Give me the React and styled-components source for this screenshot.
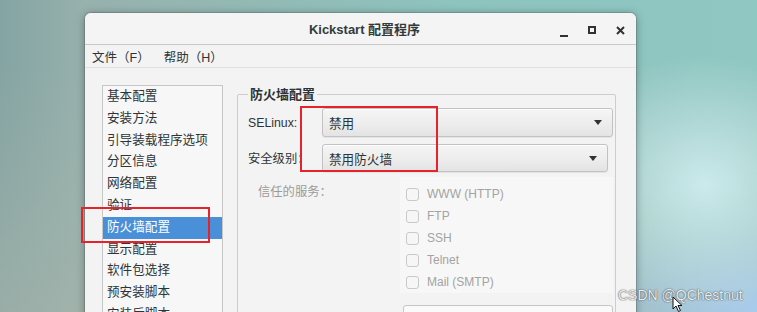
import React from "react";
import styled, { createGlobalStyle } from "styled-components";

const Global = createGlobalStyle`
  html, body { margin: 0; padding: 0; }
  body {
    width: 757px;
    height: 312px;
    overflow: hidden;
    font-family: "Liberation Sans", "Noto Sans CJK SC", sans-serif;
  }
`;

const navItems = [
  "基本配置",
  "安装方法",
  "引导装载程序选项",
  "分区信息",
  "网络配置",
  "验证",
  "防火墙配置",
  "显示配置",
  "软件包选择",
  "预安装脚本",
  "安装后脚本",
];

const services = ["WWW (HTTP)", "FTP", "SSH", "Telnet", "Mail (SMTP)"];

const App = () => {
  return (
    <Desktop>
      <Global />
      <Window>
        <TitleBar>
          <Title>Kickstart 配置程序</Title>
          <WinButtons>
            <Minimize />
            <Maximize />
            <CloseBtn>
              <svg width="9" height="9" viewBox="0 0 9 9">
                <path d="M1 1 L8 8 M8 1 L1 8" stroke="#2e3436" strokeWidth="2" />
              </svg>
            </CloseBtn>
          </WinButtons>
        </TitleBar>
        <MenuBar>
          <MenuItem>文件（F）</MenuItem>
          <MenuItem>帮助（H）</MenuItem>
        </MenuBar>
        <Content>
          <NavList>
            {navItems.map((n) => (
              <NavItem key={n} $active={n === "防火墙配置"}>{n}</NavItem>
            ))}
          </NavList>
          <Frame>
            <Legend>防火墙配置</Legend>
            <FormRow>
              <FieldLabel>SELinux:</FieldLabel>
              <Combo $big>
                <span>禁用</span>
                <Arrow />
              </Combo>
            </FormRow>
            <FormRow>
              <FieldLabel>安全级别：</FieldLabel>
              <Combo $trim={5}>
                <span>禁用防火墙</span>
                <Arrow />
              </Combo>
            </FormRow>
            <Services>
              <ServicesLabel>信任的服务：</ServicesLabel>
              <ServiceList>
                {services.map((s) => (
                  <ServiceRow key={s}>
                    <Check />
                    <ServiceName>{s}</ServiceName>
                  </ServiceRow>
                ))}
              </ServiceList>
            </Services>
            <PortBox />
          </Frame>
        </Content>
      </Window>
      <Mark style={{ left: 81, top: 207, width: 129, height: 36 }} />
      <Mark style={{ left: 300, top: 106, width: 138, height: 66 }} />
      <Watermark>CSDN @QChestnut</Watermark>
      <Cursor width="12" height="17" viewBox="0 0 12 17">
        <path d="M1 1 L1 13 L4 10 L6.5 15.5 L8.5 14.5 L6 9.5 L10 9.5 Z" fill="#fff" stroke="#111" strokeWidth="1" strokeLinejoin="round" />
      </Cursor>
    </Desktop>
  );
};

export default App;

const Desktop = styled.div`
  position: relative;
  width: 757px;
  height: 312px;
  overflow: hidden;
  padding: 13px 0 0 85px;
  box-sizing: border-box;
  background:
    radial-gradient(ellipse 150px 130px at 705px 185px, rgba(206, 237, 238, 0.95), rgba(206, 237, 238, 0)),
    radial-gradient(ellipse 200px 110px at 757px 312px, rgba(170, 204, 240, 0.95), rgba(170, 204, 240, 0)),
    linear-gradient(180deg, rgba(168, 178, 170, 0) 20%, rgba(168, 180, 170, 0.6) 100%),
    linear-gradient(90deg, #84a4a3 0, #97b1ad 85px, #8ec3be 450px, #8fc7c2 757px);
`;

const Window = styled.div`
  width: 551px;
  height: 340px;
  background: #f3f3f3;
  border-radius: 6px 6px 0 0;
  box-shadow: 0 1px 8px rgba(0, 0, 0, 0.35), 0 0 0 1px rgba(0, 0, 0, 0.12);
  display: flex;
  flex-direction: column;
  overflow: hidden;
  color: #2e3436;
`;

const TitleBar = styled.div`
  height: 31px;
  flex: none;
  display: flex;
  align-items: center;
  justify-content: center;
  position: relative;
  border-bottom: 1px solid #c9c9c9;
  background: #f4f4f4;
`;

const Title = styled.div`
  font-size: 13px;
  font-weight: 700;
  color: #333a3c;
  margin-left: 8px;
`;

const WinButtons = styled.div`
  position: absolute;
  right: 11px;
  top: 10px;
  display: flex;
  align-items: center;
  gap: 20px;
`;

const Minimize = styled.div`
  width: 8px;
  height: 10px;
  border-bottom: 2px solid #2e3436;
  box-sizing: border-box;
  margin-top: 4px;
`;

const Maximize = styled.div`
  width: 8px;
  height: 8px;
  border: 2px solid #2e3436;
  box-sizing: border-box;
`;

const CloseBtn = styled.div`
  display: flex;
`;

const MenuBar = styled.div`
  height: 22px;
  flex: none;
  display: flex;
  align-items: center;
  gap: 14px;
  padding-left: 7px;
  border-bottom: 1px solid #e1e1e1;
  font-size: 12.5px;
`;

const MenuItem = styled.span``;

const Content = styled.div`
  flex: 1;
  display: flex;
  align-items: flex-start;
  gap: 14px;
  padding: 17px 20px 0 17px;
`;

const NavList = styled.div`
  width: 121px;
  height: 260px;
  flex: none;
  box-sizing: border-box;
  border: 1px solid #c6c6c6;
  background: #f7f7f7;
  font-size: 12.6px;
`;

const NavItem = styled.div`
  height: 21.8px;
  line-height: 21.8px;
  padding-left: 4px;
  white-space: nowrap;
  background: ${(p) => (p.$active ? "#4a90d9" : "transparent")};
  color: ${(p) => (p.$active ? "#fff" : "#2e3436")};
`;

const Frame = styled.fieldset`
  flex: 1;
  margin: 1px 0 0 0;
  padding: 5px 2px 0 10px;
  border: 1px solid #cdcdcd;
  border-radius: 2px;
  min-height: 260px;
  box-sizing: border-box;
  display: flex;
  flex-direction: column;
`;

const Legend = styled.legend`
  font-size: 13px;
  font-weight: 700;
  line-height: 17px;
  padding: 0 2px;
  margin-left: 0;
  color: #2e3436;
`;

const FormRow = styled.div`
  display: flex;
  align-items: center;
  margin-bottom: 7px;
`;

const FieldLabel = styled.div`
  width: 74px;
  flex: none;
  font-size: 12.3px;
`;

const Combo = styled.div`
  flex: 1;
  height: ${(p) => (p.$big ? 29 : 28)}px;
  margin-right: ${(p) => p.$trim || 0}px;
  box-sizing: border-box;
  display: flex;
  align-items: center;
  justify-content: space-between;
  padding: 0 10px 0 6px;
  border: 1px solid #c2c2c2;
  border-radius: 3px;
  background: linear-gradient(180deg, #f5f5f5 0%, #ececec 60%, #e3e3e3 100%);
  box-shadow: 0 1px 0 rgba(0, 0, 0, 0.06), inset 0 1px 0 #fff;
  font-size: 12.6px;
  color: #2e3436;
`;

const Arrow = styled.div`
  width: 0;
  height: 0;
  border-left: 4px solid transparent;
  border-right: 4px solid transparent;
  border-top: 5px solid #2e3436;
`;

const Services = styled.div`
  display: flex;
  align-items: flex-start;
  margin-top: -2px;
`;

const ServicesLabel = styled.div`
  width: 152px;
  flex: none;
  box-sizing: border-box;
  padding-left: 10px;
  margin-top: 7px;
  line-height: 17px;
  font-size: 12.3px;
  color: #9b9b9b;
`;

const ServiceList = styled.div`
  flex: 1;
  background: #f7f7f7;
  padding: 6px 0 0 6px;
`;

const ServiceRow = styled.div`
  height: 22px;
  display: flex;
  align-items: center;
  gap: 8px;
`;

const Check = styled.div`
  width: 13px;
  height: 13px;
  box-sizing: border-box;
  border: 1px solid #c9c9c9;
  border-radius: 3px;
  background: #f6f6f6;
`;

const ServiceName = styled.span`
  font-size: 12px;
  color: #a3a3a3;
`;

const PortBox = styled.div`
  margin: 12px 0 0 155px;
  height: 30px;
  border: 1px solid #c6c6c6;
  border-radius: 3px;
  background: #fafafa;
`;

const Mark = styled.div`
  position: absolute;
  box-sizing: border-box;
  border: 2px solid #e6222b;
  pointer-events: none;
`;

const Watermark = styled.div`
  position: absolute;
  left: 618px;
  top: 287px;
  font-family: "Liberation Sans", sans-serif;
  font-size: 14px;
  color: #ececec;
  text-shadow: 0 0 1px rgba(40, 40, 40, 0.9), 0 0 2px rgba(40, 40, 40, 0.4);
`;

const Cursor = styled.svg`
  position: absolute;
  left: 672px;
  top: 296px;
`;
